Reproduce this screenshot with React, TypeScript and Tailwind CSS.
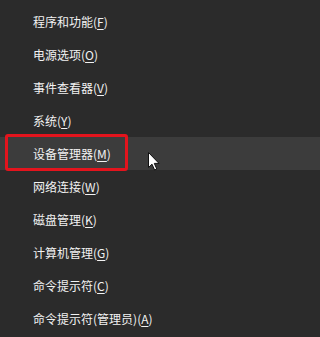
const items: { label: string; key: string; active?: boolean }[] = [
  { label: "程序和功能", key: "F" },
  { label: "电源选项", key: "O" },
  { label: "事件查看器", key: "V" },
  { label: "系统", key: "Y" },
  { label: "设备管理器", key: "M", active: true },
  { label: "网络连接", key: "W" },
  { label: "磁盘管理", key: "K" },
  { label: "计算机管理", key: "G" },
  { label: "命令提示符", key: "C" },
  { label: "命令提示符(管理员)", key: "A" },
]

function Cursor() {
  return (
    <svg width="13" height="19" viewBox="0 0 13 19" className="absolute left-[148px] top-[152px]">
      <path
        d="M0.5 0.5 L0.5 15.5 L4 12.2 L6.6 18 L8.8 17 L6.3 11.4 L11 11.4 Z"
        fill="#ffffff"
        stroke="#111"
        strokeWidth="1"
        strokeLinejoin="round"
      />
    </svg>
  )
}

export default function App() {
  return (
    <div
      className="relative h-[337px] w-full min-w-[225px] overflow-hidden bg-[#2b2b2b] pt-[5px] text-[12px] text-[#f2f2f2]"
      style={{ fontFamily: '"Noto Sans CJK SC", "Noto Sans", sans-serif' }}
    >
      {items.map((it) => (
        <div
          key={it.label + it.key}
          className={
            it.active
              ? "flex h-[33px] items-center bg-[#3c3c3c] pl-[33px]"
              : "flex h-[33px] items-center pl-[33px]"
          }
        >
          <span className="leading-none whitespace-nowrap">
            {it.label}(<span className="underline underline-offset-2">{it.key}</span>)
          </span>
        </div>
      ))}
      <div className="absolute left-[5px] top-[134px] h-[37px] w-[123px] rounded-[3px] border-[3px] border-[#e3141d]" />
      <Cursor />
    </div>
  )
}
